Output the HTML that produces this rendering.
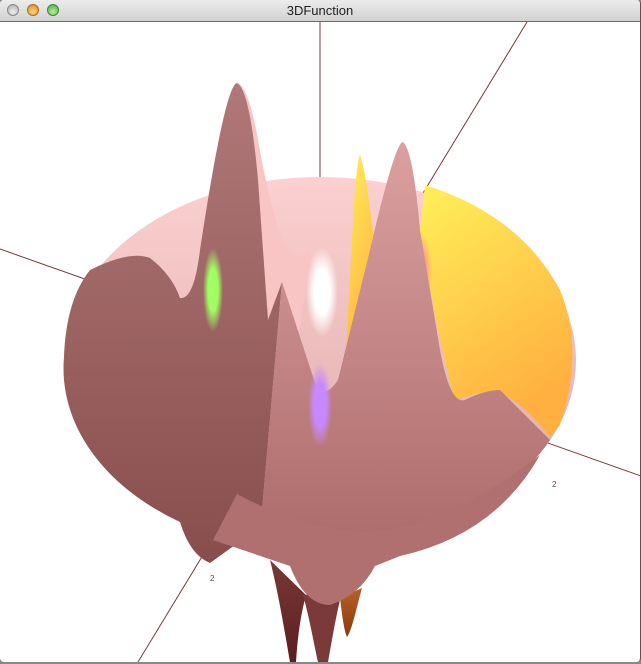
<!DOCTYPE html>
<html><head><meta charset="utf-8"><style>
html,body{margin:0;padding:0;width:641px;height:664px;overflow:hidden;background:#888;}
.win{position:absolute;left:0;top:0;width:640px;height:662px;background:#fff;border-right:1px solid #555;border-radius:4px 4px 4px 4px;overflow:hidden;}
.tb{position:absolute;left:0;top:0;width:640px;height:21px;background:linear-gradient(#ececec,#d2d2d2);border-bottom:1px solid #6a6a6a;}
.tb .t{position:absolute;left:0;right:0;top:3px;text-align:center;font:13px "Liberation Sans",sans-serif;color:#222;}
.b{position:absolute;top:4px;width:12px;height:12px;border-radius:50%;box-sizing:border-box;border:1px solid #888;}
</style></head><body>
<div class="win">
<div class="tb">
<div class="b" style="left:7px;background:radial-gradient(circle at 50% 70%,#eee,#aaa);"></div>
<div class="b" style="left:27px;background:radial-gradient(circle at 50% 70%,#ffd080,#d98a1c);border-color:#a86a20"></div>
<div class="b" style="left:47px;background:radial-gradient(circle at 50% 70%,#b8f0a0,#4aa83a);border-color:#3a8a30"></div>
<div class="t">3DFunction</div>
</div>
<svg width="640" height="640" viewBox="0 22 640 640" style="position:absolute;left:0;top:22px">
<defs>
<linearGradient id="yel" x1="0" y1="0" x2="0.4" y2="1"><stop offset="0" stop-color="#fff059"/><stop offset="1" stop-color="#ffb040"/></linearGradient>
<linearGradient id="pk" x1="0" y1="0" x2="0" y2="1"><stop offset="0" stop-color="#fcd0d0"/><stop offset="1" stop-color="#dca8a8"/></linearGradient>
<linearGradient id="dk" x1="0" y1="0" x2="0" y2="1"><stop offset="0" stop-color="#b07878"/><stop offset="1" stop-color="#884e4e"/></linearGradient>
<linearGradient id="md" x1="0" y1="0" x2="0" y2="1"><stop offset="0" stop-color="#dba0a0"/><stop offset="1" stop-color="#ad6c6c"/></linearGradient>
<linearGradient id="sp" x1="0" y1="0" x2="0" y2="1"><stop offset="0" stop-color="#7a3838"/><stop offset="1" stop-color="#5a1f1f"/></linearGradient>
<linearGradient id="or" x1="0" y1="0" x2="0" y2="1"><stop offset="0" stop-color="#b86028"/><stop offset="1" stop-color="#8a3a0c"/></linearGradient>
<radialGradient id="wh"><stop offset="0.5" stop-color="#fff"/><stop offset="1" stop-color="#fff" stop-opacity="0"/></radialGradient>
<radialGradient id="gr"><stop offset="0.5" stop-color="#a0ff60"/><stop offset="1" stop-color="#a0ff60" stop-opacity="0"/></radialGradient>
<radialGradient id="pu"><stop offset="0.5" stop-color="#c888ff"/><stop offset="1" stop-color="#c888ff" stop-opacity="0"/></radialGradient>
<radialGradient id="rd"><stop offset="0.4" stop-color="#ff9090"/><stop offset="1" stop-color="#ff9090" stop-opacity="0"/></radialGradient>
</defs>
<g stroke="#7a3a3a" stroke-width="1">
<line x1="320" y1="22" x2="320" y2="380"/>
<line x1="0" y1="249" x2="641" y2="476"/>
<line x1="527" y1="22" x2="138" y2="662"/>
</g>
<path d="M270,560 C280,600 286,640 290,662 L296,662 C298,630 302,610 306,595 Z" fill="url(#sp)"/>
<path d="M303,595 C310,620 314,645 318,662 L328,662 C332,640 336,615 342,592 Z" fill="#7a3a3a"/>
<path d="M340,598 C342,615 344,630 347,637 C352,630 356,610 362,588 Z" fill="url(#or)"/>
<ellipse cx="320" cy="360" rx="256" ry="183" fill="url(#pk)"/>
<path d="M425,185 Q520,215 560,290 Q585,350 560,425 L550,437 Q520,400 495,390 Q470,395 455,400 Q440,350 420,230 Z" fill="url(#yel)"/>
<path d="M345,370 L352,240 Q356,160 360,155 Q366,170 375,250 L372,380 Z" fill="url(#yel)"/>
<path d="M237,83 Q248,85 258,140 Q270,210 285,245 Q300,260 310,250 L300,330 L270,320 Z" fill="#f8c4c4"/>
<ellipse cx="322" cy="292" rx="16" ry="45" fill="url(#wh)"/>
<ellipse cx="420" cy="272" rx="12" ry="40" fill="url(#rd)"/>
<path d="M64,357 Q66,300 90,270 Q130,250 150,258 Q172,275 180,298 Q194,300 200,250 Q225,85 237,83 Q250,90 258,180 L268,320 L282,282 L262,510 L235,545 L210,563 Q190,555 180,522 A256,183 0 0 1 64,357 Z" fill="url(#dk)"/>
<ellipse cx="213" cy="290" rx="10" ry="42" fill="url(#gr)"/>
<path d="M282,282 L318,392 Q328,395 338,380 L370,250 Q395,142 403,142 Q413,150 420,230 L440,350 Q450,405 465,400 Q485,390 500,390 L550,440 A256,183 0 0 1 262,538 L262,510 Z" fill="url(#md)"/>
<ellipse cx="320" cy="405" rx="12" ry="42" fill="url(#pu)"/>
<path d="M237,494 Q300,528 360,532 Q440,532 540,455 Q495,535 400,556 L375,566 Q360,595 330,605 Q305,605 290,566 L213,540 Z" fill="#b07070"/>
<text x="552" y="487" font-family="Liberation Sans,sans-serif" font-size="8" fill="#7a3a3a">2</text>
<text x="210" y="581" font-family="Liberation Sans,sans-serif" font-size="8" fill="#7a3a3a">2</text>
</svg>
</div>
</body></html>
